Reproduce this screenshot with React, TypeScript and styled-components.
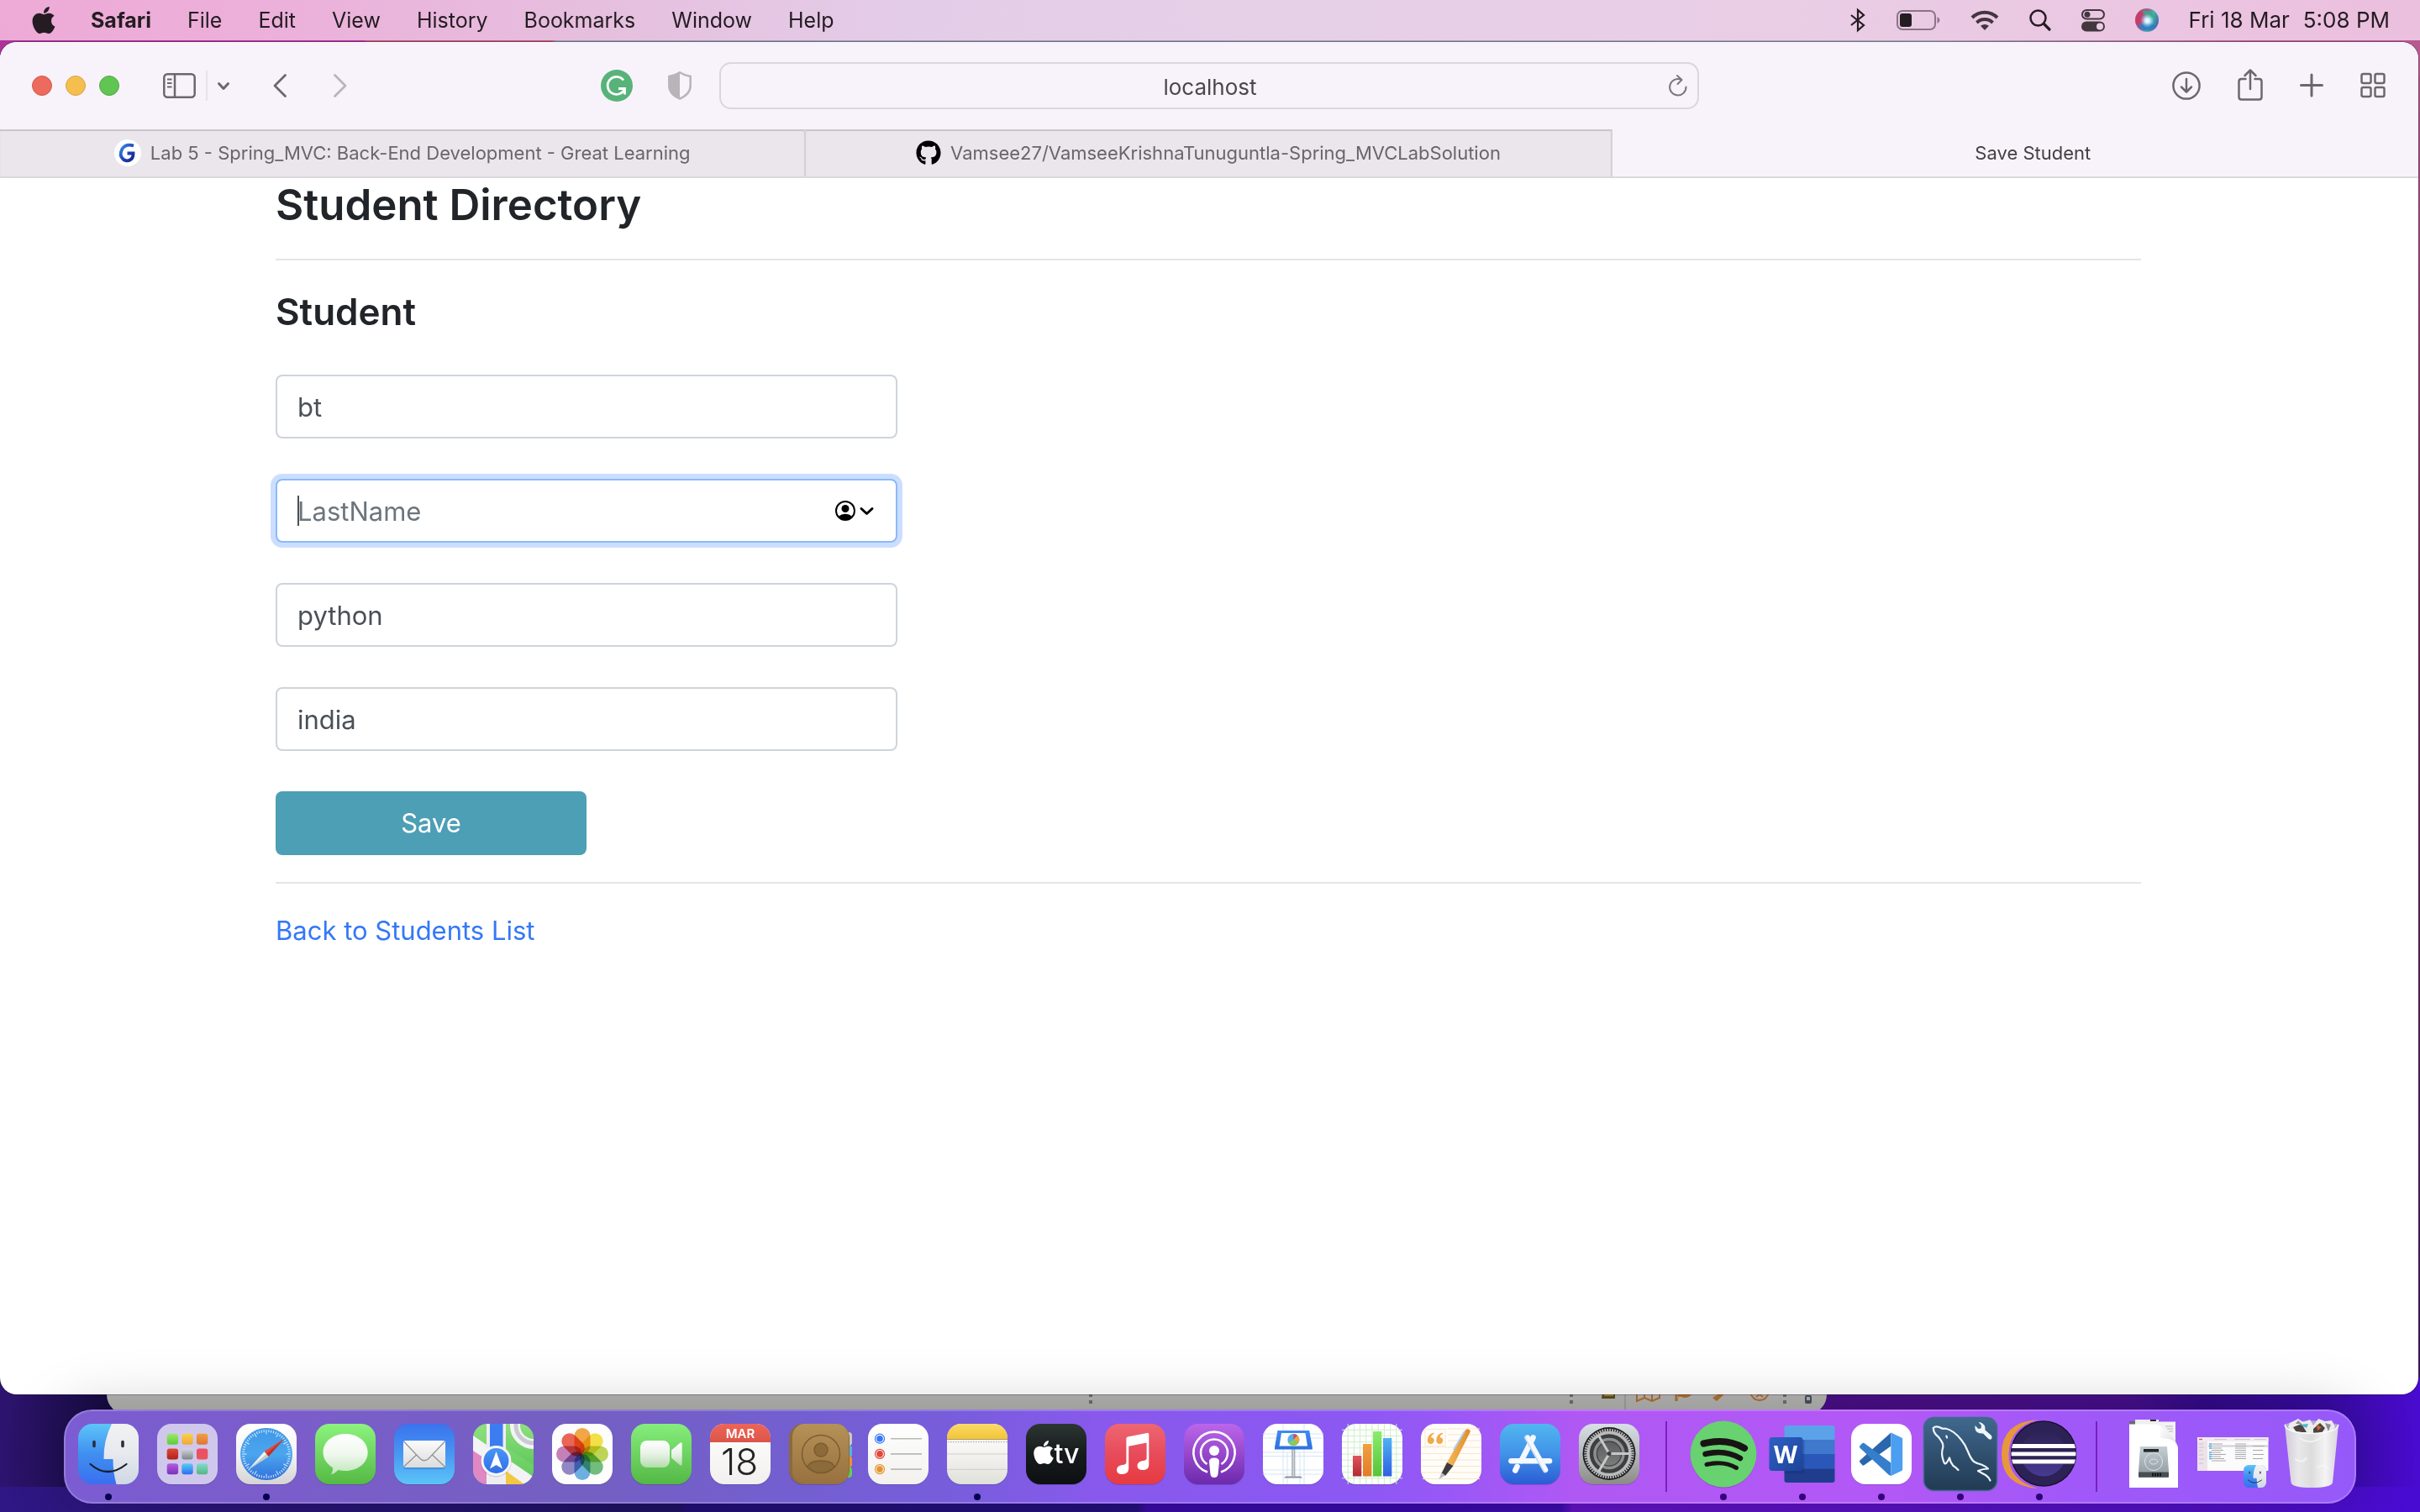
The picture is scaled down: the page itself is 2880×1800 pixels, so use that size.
import React from 'react';
import styled, { createGlobalStyle } from 'styled-components';
import { FaApple, FaGithub } from 'react-icons/fa';

const GlobalStyle = createGlobalStyle`
  *, *::before, *::after { box-sizing: border-box; }
  html, body { margin: 0; padding: 0; }
  body {
    font-family: Inter, "Liberation Sans", sans-serif;
    -webkit-font-smoothing: antialiased;
  }
  button, input { font: inherit; }
  button { background: none; border: 0; padding: 0; margin: 0; color: inherit; }
  svg { display: block; overflow: visible; }
`;

/* ---------- desktop ---------- */

const Desktop = styled.div`
  display: flex;
  flex-direction: column;
  min-height: 100vh;
  overflow: hidden;
  background:
    linear-gradient(90deg, #ad339b 0%, #b0359b 15%, #bd5876 15.2%, #bd5876 22.8%, #9299ae 23%, #a9a3b5 80%, #b4608f 93%, #b85a92 100%) top / 100% 90px no-repeat,
    linear-gradient(90deg, #2f1785 0%, #1f1262 28%, #220f75 28.4%, #24107c 47%, #390ba6 47.4%, #3a0bac 64.5%, #6212c4 65%, #5010c4 92%, #480bd2 100%) bottom / 100% 30px no-repeat,
    linear-gradient(90deg, #2e1470 0%, #170b42 4.4%, #200d55 50%, #4a0f86 76%, #450f8a 88%, #330a88 91%, #360aa0 96%, #4a0bd0 100%) bottom / 100% 160px no-repeat,
    linear-gradient(180deg, #b85a92, #6b2458 40%, #3a1060);
`;

const MenuBar = styled.header`
  display: flex;
  justify-content: space-between;
  align-items: center;
  height: 48px;
  padding: 0 36px 0 39px;
  color: #241c22;
  font-size: 25px;
  line-height: 32px;
  background: linear-gradient(90deg, #eeaad7 0%, #ecb0da 11%, #e6bede 24%, #e3cce7 37%, #e5d0e8 52%, #e9cde5 75%, #ebc5e1 90%, #ebbfde 100%);
`;

const MenuGroup = styled.nav`
  display: flex;
  align-items: center;
  gap: 43px;
`;

const AppleMark = styled(FaApple)`
  width: 26px;
  height: 32px;
`;

const MenuItem = styled.button<{ $bold?: boolean }>`
  font-weight: ${(p) => (p.$bold ? 700 : 400)};
  white-space: nowrap;
`;

const StatusGroup = styled.div`
  display: flex;
  align-items: center;
  gap: 36px;
`;

const Clock = styled.time`
  display: flex;
  gap: 16px;
  font-size: 26px;
  white-space: nowrap;
`;

/* ---------- browser window ---------- */

const BrowserWindow = styled.main`
  position: relative;
  z-index: 1;
  flex: 1;
  display: flex;
  flex-direction: column;
  margin: 2px 2px 0 0;
  border-radius: 20px;
  overflow: hidden;
  background: #fff;
  box-shadow: 0 0 0 1px rgba(40, 20, 40, 0.35);
`;

const Toolbar = styled.div`
  display: grid;
  grid-template-columns: minmax(0, 1fr) minmax(320px, 40.5%) minmax(0, 1fr);
  align-items: center;
  height: 104px;
  background: #f8f3fa;
  color: #6c666d;
`;

const ToolbarLeft = styled.div`
  display: flex;
  align-items: center;
  padding: 0 33px 0 38px;
`;

const TrafficLights = styled.div`
  display: flex;
  gap: 16px;
  margin-right: 52px;
`;

const Light = styled.button<{ $fill: string; $edge: string }>`
  width: 24px;
  height: 24px;
  border-radius: 50%;
  background: ${(p) => p.$fill};
  border: 1px solid ${(p) => p.$edge};
`;

const SidebarGroup = styled.div`
  display: flex;
  align-items: center;
  gap: 12px;
  margin-right: 52px;
`;

const ToolDivider = styled.span`
  width: 2px;
  height: 36px;
  background: #e8e2ea;
`;

const HistoryGroup = styled.div`
  display: flex;
  gap: 56px;
`;

const ExtensionGroup = styled.div`
  display: flex;
  align-items: center;
  gap: 42px;
  margin-left: auto;
`;

const AddressBar = styled.label`
  display: flex;
  align-items: center;
  height: 56px;
  padding: 0 12px 0 36px;
  border: 2px solid #dad6db;
  border-radius: 14px;
`;

const AddressInput = styled.input`
  flex: 1;
  min-width: 0;
  border: 0;
  outline: 0;
  padding: 3px 0 0;
  background: none;
  text-align: center;
  font-size: 26px;
  line-height: 32px;
  color: #4b474c;
`;

const ToolbarRight = styled.div`
  display: flex;
  align-items: center;
  justify-content: flex-end;
  gap: 44px;
  padding-right: 39px;
`;

const TabBar = styled.div`
  display: grid;
  grid-template-columns: repeat(3, minmax(0, 1fr));
  height: 58px;
  border-bottom: 2px solid #dcd8dd;
`;

const Tab = styled.button<{ $active?: boolean }>`
  display: flex;
  align-items: center;
  justify-content: center;
  gap: 11px;
  padding-left: ${(p) => (p.$active ? '42px' : '0')};
  font-size: 22px;
  line-height: 28px;
  white-space: nowrap;
  color: ${(p) => (p.$active ? '#454046' : '#6a646c')};
  background: ${(p) => (p.$active ? '#f8f3fa' : '#ebe6ec')};
  border-right: ${(p) => (p.$active ? '0' : '2px solid #d6d1d7')};
  box-shadow: ${(p) => (p.$active ? 'none' : 'inset 0 2px 1px #c9c4ca')};
`;

/* ---------- page ---------- */

const Page = styled.section`
  flex: 1;
  width: 100%;
  max-width: 2280px;
  margin: 0 auto;
  padding: 0 31px 0 29px;
  color: #212529;
`;

const Title = styled.h3`
  margin: 0;
  font-size: 51px;
  line-height: 64px;
  font-weight: 600;
`;

const Rule = styled.hr`
  margin: 32px 0;
  border: 0;
  border-top: 2px solid #e5e5e5;
`;

const Subtitle = styled.h4`
  margin: 0 0 46px;
  font-size: 44px;
  line-height: 58px;
  font-weight: 600;
`;

const StudentForm = styled.form`
  display: flex;
  flex-direction: column;
  gap: 48px;
`;

const Field = styled.div`
  position: relative;
  width: 33.33%;
`;

const TextInput = styled.input<{ $focused?: boolean }>`
  display: block;
  width: 100%;
  height: 76px;
  padding: 12px 24px;
  font-size: 31px;
  line-height: 48px;
  color: #495057;
  background: #fff;
  outline: 0;
  border: 2px solid ${(p) => (p.$focused ? '#8abafb' : '#ced4da')};
  border-radius: 8px;
  box-shadow: ${(p) => (p.$focused ? '0 0 0 6px #ccdeff' : 'none')};
  &::placeholder { color: #6c757d; opacity: 1; }
`;

const Caret = styled.span`
  position: absolute;
  left: 26px;
  top: 20px;
  width: 2px;
  height: 36px;
  background: #495057;
`;

const AutofillButton = styled.button`
  position: absolute;
  right: 28px;
  top: 26px;
  color: #000;
`;

const SaveButton = styled.button`
  width: 16.67%;
  height: 76px;
  border-radius: 8px;
  font-size: 31px;
  line-height: 48px;
  color: #fff;
  background: #4c9fb5;
`;

const BackLink = styled.a`
  font-size: 31px;
  line-height: 48px;
  color: #3478f6;
  text-decoration: none;
`;

/* ---------- dock ---------- */

const PeekStrip = styled.div`
  position: relative;
  height: 18px;
`;

const PeekWindow = styled.div`
  position: absolute;
  left: 4.4%;
  right: 24.5%;
  top: -30px;
  height: 54px;
  border-radius: 0 0 24px 24px;
  background: #b4b4b3;
  display: flex;
  justify-content: flex-end;
  align-items: flex-start;
  padding: 28px 4px 0 0;
`;

const DockBar = styled.footer`
  position: relative;
  z-index: 2;
  display: flex;
  align-self: center;
  margin-bottom: 10px;
  padding: 7px 4px 2px;
  border: 2px solid rgba(255, 255, 255, 0.2);
  border-radius: 34px;
  background: linear-gradient(90deg, #7c5cd2 0%, #7a5dca 10%, #745fc2 22%, #735fd0 32%, #785ddc 39%, #8859ec 45%, #8b58f2 56%, #9758f6 60%, #b058f4 66%, #b158f6 80%, #a058f8 88%, #9659f9 100%) border-box;
  box-shadow: 0 0 70px rgba(0, 0, 0, 0.22);
`;

const DockItem = styled.button`
  display: flex;
  flex-direction: column;
  align-items: center;
  width: 94px;
`;

const RunningDot = styled.span<{ $color?: string }>`
  width: 8px;
  height: 8px;
  margin-top: 3px;
  border-radius: 50%;
  background: ${(p) => p.$color ?? 'transparent'};
`;

const DockDivider = styled.span`
  width: 2px;
  height: 84px;
  margin: 5px 20px 0;
  background: #7a20c0;
`;

/* ---------- small icons ---------- */

const Bluetooth = () => (
  <svg width="20" height="28" viewBox="0 0 20 28" fill="none" stroke="#241c22" strokeWidth="2.2">
    <path d="M2 8 L17 20 L10 26 V2 L17 8 L2 20" />
  </svg>
);

const Battery = () => (
  <svg width="52" height="24" viewBox="0 0 52 24">
    <rect x="1" y="1" width="45" height="22" rx="6" fill="none" stroke="#8d7387" strokeWidth="2" />
    <rect x="4" y="4" width="14" height="16" rx="3" fill="#241c22" />
    <path d="M48.500 8 q3 1.500 3 4 t-3 4z" fill="#8d7387" />
  </svg>
);

const Wifi = () => (
  <svg width="34" height="24" viewBox="0 0 34 24" fill="none" stroke="#43363f" strokeWidth="4">
    <path d="M2 9 A21 21 0 0 1 32 9" />
    <path d="M7.500 15 A13.500 13.500 0 0 1 26.500 15" />
    <path d="M17 24 L12 18.800 Q17 15 22 18.800Z" fill="#43363f" stroke="none" />
  </svg>
);

const Search = () => (
  <svg width="26" height="26" viewBox="0 0 26 26" fill="none" stroke="#241c22" strokeLinecap="round">
    <circle cx="10.500" cy="10.500" r="9" strokeWidth="2.500" />
    <path d="M17.500 17.500 L24 24" strokeWidth="3.200" />
  </svg>
);

const ControlCenter = () => (
  <svg width="28" height="27" viewBox="0 0 28 27">
    <rect x="1" y="1" width="26" height="10.500" rx="5.250" fill="none" stroke="#43363f" strokeWidth="2" />
    <circle cx="7" cy="6.250" r="3.500" fill="#43363f" />
    <rect x="0" y="14.500" width="28" height="12" rx="6" fill="#43363f" />
    <circle cx="22" cy="20.500" r="4" fill="#e9cde5" />
  </svg>
);

const Siri = () => (
  <svg width="28" height="28" viewBox="0 0 28 28">
    <defs>
      <linearGradient id="siriBase" x1="0" y1="0.300" x2="1" y2="0.700">
        <stop offset="0" stopColor="#c23f74" />
        <stop offset="0.400" stopColor="#8d6a9a" />
        <stop offset="0.650" stopColor="#3fb6a6" />
        <stop offset="1" stopColor="#4a5bb0" />
      </linearGradient>
      <radialGradient id="siriGlow">
        <stop offset="0" stopColor="#fff" />
        <stop offset="0.350" stopColor="#d8f6ff" stopOpacity="0.900" />
        <stop offset="1" stopColor="#6fd6ff" stopOpacity="0" />
      </radialGradient>
    </defs>
    <circle cx="14" cy="14" r="14" fill="url(#siriBase)" />
    <path d="M3 21 Q13 14 25 21 A14 14 0 0 1 3 21Z" fill="#2f78c4" opacity="0.850" />
    <path d="M0.500 13 Q2 5 9 1.500 Q8 12 12 16 Q5 20 2 20 Q0 16 0.500 13Z" fill="#c93a66" opacity="0.800" />
    <path d="M8 3 Q20 2 24 12 Q15 12 8 3Z" fill="#3aa77d" opacity="0.900" />
    <circle cx="14.500" cy="14.500" r="8.500" fill="url(#siriGlow)" />
  </svg>
);

const SidebarIcon = () => (
  <svg width="39" height="30" viewBox="0 0 39 30" fill="none" stroke="currentColor" strokeWidth="2.500">
    <rect x="1.300" y="1.300" width="36.400" height="27.400" rx="4" />
    <path d="M14 1 V29" />
    <path d="M5 7.500 H10.500 M5 12 H10.500 M5 16.500 H10.500" strokeWidth="2" />
  </svg>
);

const Chevron = ({ w = 14, h = 9, sw = 3 }: { w?: number; h?: number; sw?: number }) => (
  <svg width={w} height={h} viewBox="0 0 14 9" fill="none" stroke="currentColor" strokeWidth={sw} strokeLinecap="round" strokeLinejoin="round">
    <path d="M1.500 1.500 L7 7.500 L12.500 1.500" />
  </svg>
);

const Back = () => (
  <svg width="16" height="28" viewBox="0 0 16 28" fill="none" stroke="currentColor" strokeWidth="2.800" strokeLinecap="round" strokeLinejoin="round">
    <path d="M14.500 1.500 L2 14 L14.500 26.500" />
  </svg>
);

const Forward = () => (
  <svg width="16" height="28" viewBox="0 0 16 28" fill="none" stroke="#b9b4ba" strokeWidth="2.800" strokeLinecap="round" strokeLinejoin="round">
    <path d="M1.500 1.500 L14 14 L1.500 26.500" />
  </svg>
);

const Grammarly = () => (
  <svg width="38" height="38" viewBox="0 0 38 38">
    <circle cx="19" cy="19" r="19" fill="#57b37a" />
    <path d="M27 12.500 A10.500 10.500 0 1 0 28.500 22.500 M21 22.500 H28.500 V29.500" fill="none" stroke="#fff" strokeWidth="2.800" />
  </svg>
);

const Shield = () => (
  <svg width="28" height="34" viewBox="0 0 28 34">
    <path d="M14 1.300 Q20 5 26.700 6 V17 Q26.700 27 14 32.500 Q1.300 27 1.300 17 V6 Q8 5 14 1.300Z" fill="none" stroke="#b9b4ba" strokeWidth="2.500" />
    <path d="M14 1.300 Q8 5 1.300 6 V17 Q1.300 27 14 32.500Z" fill="#b9b4ba" />
  </svg>
);

const Reload = () => (
  <svg width="22" height="26" viewBox="0 0 22 26" fill="none" stroke="#7b767c" strokeWidth="2" strokeLinecap="round" strokeLinejoin="round">
    <path d="M20.500 14.500 A9.700 9.700 0 1 1 15 6 " />
    <path d="M10 1 L15.500 6 L10.500 11" />
  </svg>
);

const Download = () => (
  <svg width="34" height="34" viewBox="0 0 34 34" fill="none" stroke="currentColor" strokeWidth="2.500" strokeLinecap="round" strokeLinejoin="round">
    <circle cx="17" cy="17" r="15.600" />
    <path d="M17 9 V24 M11 18.500 L17 24.500 L23 18.500" />
  </svg>
);

const Share = () => (
  <svg width="30" height="38" viewBox="0 0 30 38" fill="none" stroke="currentColor" strokeWidth="2.500" strokeLinecap="round" strokeLinejoin="round">
    <path d="M9.500 11 H4.500 Q1.500 11 1.500 14 V32.500 Q1.500 35.500 4.500 35.500 H25.500 Q28.500 35.500 28.500 32.500 V14 Q28.500 11 25.500 11 H20.500" />
    <path d="M15 23 V1 M8.500 7 L15 0.500 L21.500 7" />
  </svg>
);

const Plus = () => (
  <svg width="28" height="28" viewBox="0 0 28 28" fill="none" stroke="currentColor" strokeWidth="3" strokeLinecap="round">
    <path d="M14 1 V26 M1.500 13.500 H26.500" />
  </svg>
);

const GridIcon = () => (
  <svg width="30" height="30" viewBox="0 0 30 30" fill="none" stroke="currentColor" strokeWidth="2.500">
    <rect x="1.500" y="1" width="11" height="11" rx="2" />
    <rect x="17.500" y="1" width="11" height="11" rx="2" />
    <rect x="1.500" y="17" width="11" height="11" rx="2" />
    <rect x="17.500" y="17" width="11" height="11" rx="2" />
  </svg>
);

const GreatLearning = () => (
  <svg width="32" height="32" viewBox="0 0 32 32">
    <defs>
      <linearGradient id="glG" x1="0" y1="0" x2="1" y2="1">
        <stop offset="0" stopColor="#3b8be8" />
        <stop offset="0.600" stopColor="#1d3fb0" />
        <stop offset="1" stopColor="#14258a" />
      </linearGradient>
    </defs>
    <circle cx="16" cy="16" r="16" fill="#fff" />
    <path d="M23 7.500 Q14 4.500 9.500 11 Q5 19 11 24 Q17 27.500 21.500 22 Q22.500 20 22.500 16.500 H15.500" fill="none" stroke="url(#glG)" strokeWidth="3.800" />
  </svg>
);

const AutofillIcon = () => (
  <svg width="46" height="24" viewBox="0 0 46 24">
    <circle cx="12" cy="12" r="11" fill="none" stroke="#000" strokeWidth="2" />
    <circle cx="12" cy="9.500" r="4.500" fill="#000" />
    <path d="M3.500 19 Q12 12.500 20.500 19 Q12 27 3.500 19Z" fill="#000" />
    <path d="M31 9.500 L37.500 15.500 L44 9.500" fill="none" stroke="#000" strokeWidth="3" strokeLinecap="round" strokeLinejoin="round" />
  </svg>
);

/* ---------- dock artwork, each on an 88 x 88 board ---------- */

const Grad = ({ id, stops, x2 = 0, y2 = 1 }: { id: string; stops: string[]; x2?: number; y2?: number }) => (
  <linearGradient id={id} x1="0" y1="0" x2={x2} y2={y2}>
    {stops.map((c, i) => (
      <stop key={i} offset={i / (stops.length - 1)} stopColor={c} />
    ))}
  </linearGradient>
);

const Board = ({ children }: { children: React.ReactNode }) => (
  <svg width="88" height="88" viewBox="0 0 88 88">
    {children}
  </svg>
);

const Tile = ({ fill }: { fill: string }) => (
  <>
    <rect x="8" y="9" width="72" height="72" rx="17" fill="#000" opacity="0.150" />
    <rect x="8" y="8" width="72" height="72" rx="17" fill={fill} />
  </>
);

const FinderFace = ({ id }: { id: string }) => (
  <>
    <defs>
      <Grad id={`${id}b`} stops={['#5ec4f8', '#3f8ff0', '#3a6ff0']} />
      <Grad id={`${id}w`} stops={['#f2f2f2', '#e6e9ee', '#cfd8e4']} />
      <clipPath id={`${id}c`}><rect x="8" y="8" width="72" height="72" rx="17" /></clipPath>
    </defs>
    <g clipPath={`url(#${id}c)`}>
      <rect x="8" y="8" width="72" height="72" fill={`url(#${id}b)`} />
      <path d="M48 8 Q38 28 38.500 50 H49.500 Q49.500 66 53.500 80 H80 V8Z" fill={`url(#${id}w)`} />
    </g>
    <path d="M27 29.500 V34.500 M61 29.500 V34.500" stroke="#26303c" strokeWidth="3.600" strokeLinecap="round" />
    <path d="M22.500 56 Q43 74 65.500 56" fill="none" stroke="#18202a" strokeWidth="2.200" strokeLinecap="round" />
  </>
);

const FinderIcon = () => <Board><FinderFace id="fnd" /></Board>;

const LaunchpadIcon = () => {
  const colors = [['#9be86b', '#5fcb3c'], ['#f8d24a', '#efa83a'], ['#f0a03c', '#e0743a'], ['#e04838', '#b02218'], ['#d4d8dc', '#7f8488'], ['#ee4d62', '#e85560'], ['#b35ce0', '#7a30b8'], ['#56cdf5', '#2f6cf0'], ['#7fdcd0', '#55b67e']];
  return (
    <Board>
      <defs>{colors.map((c, i) => <Grad key={i} id={`lp${i}`} stops={c} />)}</defs>
      <Tile fill="#d0c8ec" />
      {colors.map((_, i) => (
        <rect key={i} x={19.7 + (i % 3) * 17.6} y={19.7 + Math.floor(i / 3) * 17.8} width="13.400" height="13" rx="3" fill={`url(#lp${i})`} />
      ))}
    </Board>
  );
};

const SafariIcon = () => (
  <Board>
    <defs>
      <Grad id="sfT" stops={['#ffffff', '#f4f4f4', '#d4d4d6']} />
      <Grad id="sfC" stops={['#3f97e8', '#4ca6ee', '#2f6fdc']} />
    </defs>
    <Tile fill="url(#sfT)" />
    <circle cx="44" cy="44" r="31" fill="url(#sfC)" />
    {Array.from({ length: 60 }, (_, i) => (
      <path key={i} d={`M44 15 V${i % 5 ? 18 : 20.5}`} stroke="#dceeff" strokeWidth="1" transform={`rotate(${i * 6} 44 44)`} />
    ))}
    <path d="M65.500 25.500 L41.500 41 L46.500 47Z" fill="#e5483c" />
    <path d="M22.500 62.500 L41.500 41 L46.500 47Z" fill="#f3f3f5" />
    <path d="M65.500 25.500 L46.500 47 L44 44Z" fill="#b8342c" />
    <path d="M22.500 62.500 L46.500 47 L44 44Z" fill="#c4c8d0" />
  </Board>
);

const MessagesIcon = () => (
  <Board>
    <defs>
      <Grad id="msT" stops={['#8cf37f', '#55b944']} />
      <Grad id="msB" stops={['#ffffff', '#f0f8ee', '#bfe6b8']} />
    </defs>
    <Tile fill="url(#msT)" />
    <path d="M44 20 C59 20 70.700 29.500 70.700 42 C70.700 54.500 59 64 44 64 C41 64 38 63.600 35.300 62.900 C33 65.500 30.500 67.500 27 68 C28.800 65.500 29.200 63 28.800 60 C22 56 17.500 49.500 17.500 42 C17.500 29.500 29 20 44 20Z" fill="url(#msB)" />
  </Board>
);

const MailIcon = () => (
  <Board>
    <defs>
      <Grad id="mlT" stops={['#3a72ee', '#4797f2', '#5cc4f8']} />
      <Grad id="mlE" stops={['#fbfbfb', '#dcdcdc']} />
    </defs>
    <Tile fill="url(#mlT)" />
    <rect x="19" y="30" width="50" height="32" rx="3" fill="#1d4fa8" opacity="0.300" />
    <rect x="19" y="28" width="50" height="32" rx="3" fill="url(#mlE)" />
    <path d="M20 29.500 L38.500 49 Q44 54.500 49.500 49 L68 29.500 M20 58.800 L34.500 45 M68 58.800 L53.500 45" fill="none" stroke="#8f9194" strokeWidth="1.200" />
  </Board>
);

const MapsIcon = () => (
  <Board>
    <defs>
      <clipPath id="mpC"><rect x="8" y="8" width="72" height="72" rx="17" /></clipPath>
      <Grad id="mpG" stops={['#8fe07e', '#5fc85a']} />
      <Grad id="mpB" stops={['#4a94f6', '#2f6fe8']} />
    </defs>
    <g clipPath="url(#mpC)">
      <rect x="8" y="8" width="72" height="72" fill="url(#mpG)" />
      <path d="M8 37 L26 50 V80 H8Z" fill="#e088c4" />
      <path d="M47 62 L74 82 H47Z" fill="#f2c843" />
      <path d="M2 18 L84 74 V90 L2 36Z" fill="#f3f3f6" />
      <path d="M47 36 L84 60 V20 L47 8Z" fill="url(#mpG)" />
      <path d="M47 64 L69 80 H47Z" fill="#f2c843" />
      <rect x="24" y="8" width="23" height="72" fill="#eeeef2" />
      <rect x="28" y="8" width="15.500" height="44" fill="#3b7df0" />
      <circle cx="80" cy="10" r="22" fill="none" stroke="#f4f4f6" strokeWidth="12" />
      <circle cx="80" cy="10" r="21" fill="none" stroke="#c9cbd0" strokeWidth="5" />
    </g>
    <circle cx="35.500" cy="53" r="18.500" fill="#000" opacity="0.120" />
    <circle cx="35.500" cy="52" r="18" fill="#f5f5f7" />
    <circle cx="35.500" cy="52" r="15" fill="url(#mpB)" />
    <path d="M35.500 41 L43 61.500 L35.500 57 L28 61.500Z" fill="#fff" />
  </Board>
);

const PhotosIcon = () => {
  const petals = ['#f09a2e', '#f2dc30', '#b4d040', '#5cb46c', '#58a4dc', '#7f78bc', '#bc6fae', '#e8503e'];
  return (
    <Board>
      <Tile fill="#fdfdfd" />
      <g style={{ isolation: 'isolate' }}>
        {petals.map((c, i) => (
          <rect key={c} x="34.500" y="13" width="19" height="31" rx="9.500" fill={c} opacity="0.880" transform={`rotate(${i * 45} 44 44)`} style={{ mixBlendMode: 'multiply' }} />
        ))}
      </g>
    </Board>
  );
};

const FaceTimeIcon = () => (
  <Board>
    <defs>
      <Grad id="ftT" stops={['#86ee7c', '#54b846']} />
      <Grad id="ftC" stops={['#ffffff', '#e8f2e6', '#b4dcac']} />
    </defs>
    <Tile fill="url(#ftT)" />
    <rect x="19" y="28" width="35" height="32" rx="8" fill="url(#ftC)" />
    <path d="M56 39.500 L66 31 Q68.700 29 68.700 32 V56 Q68.700 59 66 57 L56 48.500Z" fill="url(#ftC)" />
  </Board>
);

const CalendarIcon = () => (
  <Board>
    <defs>
      <Grad id="clT" stops={['#ffffff', '#f1f0ee']} />
      <Grad id="clR" stops={['#ee6558', '#da5548']} />
    </defs>
    <Tile fill="url(#clT)" />
    <path d="M8 30 V25 A17 17 0 0 1 25 8 H63 A17 17 0 0 1 80 25 V30Z" fill="url(#clR)" />
    <text x="44" y="25" textAnchor="middle" fontSize="15" fontWeight="600" fill="#fff" fontFamily="Inter, sans-serif">MAR</text>
    <text x="43" y="69" textAnchor="middle" fontSize="44" fontWeight="300" fill="#242424" fontFamily="Inter, sans-serif">18</text>
  </Board>
);

const ContactsIcon = () => (
  <Board>
    <defs><Grad id="ctT" stops={['#b59257', '#97703f']} /></defs>
    <rect x="68" y="18" width="15" height="16" rx="4" fill="#c9c9c4" />
    <rect x="68" y="34" width="15" height="13" rx="2" fill="#55b4e4" />
    <rect x="68" y="47" width="15" height="12" rx="2" fill="#ee9030" />
    <rect x="68" y="59" width="15" height="13" rx="4" fill="#62cc58" />
    <Tile fill="#8c6a3a" />
    <rect x="12" y="8" width="67" height="72" rx="15" fill="url(#ctT)" />
    <g stroke="#7c5c30" strokeWidth="1.500">
      <circle cx="46" cy="44" r="22.500" fill="none" />
      <circle cx="46" cy="39" r="8" fill="#8c6a3a" />
      <path d="M29.500 59 Q33 52 46 52 Q59 52 62.500 59 Q46 74 29.500 59Z" fill="#8c6a3a" />
    </g>
  </Board>
);

const RemindersIcon = () => (
  <Board>
    <defs><Grad id="rmT" stops={['#ffffff', '#f2f1ee']} /></defs>
    <Tile fill="url(#rmT)" />
    {['#3478f6', '#e2463a', '#e8932f'].map((c, i) => (
      <g key={c}>
        <circle cx="22" cy={25.7 + i * 18.2} r="5.500" fill="none" stroke={c} strokeWidth="1.200" />
        <circle cx="22" cy={25.7 + i * 18.2} r="3.800" fill={c} />
        <path d={`M35 ${25.7 + i * 18.2} H72`} stroke="#b9b9b6" strokeWidth="1.600" />
      </g>
    ))}
  </Board>
);

const NotesIcon = () => (
  <Board>
    <defs>
      <Grad id="ntT" stops={['#ffffff', '#f4f3f0', '#e0e0da']} />
      <Grad id="ntY" stops={['#fadb6a', '#f3c436']} />
    </defs>
    <Tile fill="url(#ntT)" />
    <path d="M8 26 V25 A17 17 0 0 1 25 8 H63 A17 17 0 0 1 80 25 V26Z" fill="url(#ntY)" />
    <path d="M8 26.500 H80" stroke="#a9966a" strokeWidth="1.200" />
    <path d="M9 29.500 H80" stroke="#b5b5b0" strokeWidth="1.500" strokeDasharray="1.500 1.500" />
    <path d="M8 44 H80 M8 62.300 H80" stroke="#cfcfca" strokeWidth="1" />
  </Board>
);

const TvIcon = () => (
  <Board>
    <defs><Grad id="tvT" stops={['#2c3633', '#161b1c', '#0d1012']} /></defs>
    <Tile fill="url(#tvT)" />
    <FaApple x="15" y="28" size={28} viewBox="18 32 348 448" color="#fff" />
    <text x="41.500" y="54.500" fontSize="32" fontWeight="500" fill="#fff" fontFamily="Inter, sans-serif">tv</text>
  </Board>
);

const MusicIcon = () => (
  <Board>
    <defs><Grad id="muT" stops={['#ee6673', '#e84b5a', '#e63a40']} /></defs>
    <Tile fill="url(#muT)" />
    <path d="M33.400 25.500 Q33.400 24 35 23.600 L58 18.900 Q60.300 18.500 60.300 20.500 V57 Q60 63 53 63 Q46.500 63 46.500 58 Q46.500 53 53 52 Q57.600 51.500 57.600 49 V30.500 L36.200 34.800 V61.500 Q36 68 28.500 68 Q22 68 22 63 Q22 58 28.500 57 Q33.400 56.500 33.400 54Z" fill="#fff" />
  </Board>
);

const PodcastsIcon = () => (
  <Board>
    <defs><Grad id="pcT" stops={['#bb66ea', '#9647cc', '#6c2aac']} /></defs>
    <Tile fill="url(#pcT)" />
    <g fill="none" stroke="#fff" strokeWidth="2.600">
      <path d="M36 65.500 A24.600 24.600 0 1 1 52 65.500" />
      <path d="M35.500 56 A16 16 0 1 1 52.500 56" />
    </g>
    <circle cx="44" cy="40" r="6" fill="#fff" />
    <path d="M38 53 Q38 48.500 44 48.500 Q50 48.500 50 53 L48.500 68 Q48 72 44 72 Q40 72 39.500 68Z" fill="#fff" />
  </Board>
);

const KeynoteIcon = () => (
  <Board>
    <defs>
      <Grad id="knB" stops={['#3f8cf0', '#2f6fe0']} />
      <Grad id="knP" stops={['#8d949e', '#d8dbe0', '#8d949e']} x2={1} y2={0} />
    </defs>
    <Tile fill="#fff" />
    <path d="M32 8 V80 M37 42 V80 M52 42 V80 M57 8 V80 M8 20 H80 M8 25 H80 M8 42 H80 M8 46.500 H80 M8 63 H80 M8 68 H80" stroke="#d5e6f4" strokeWidth="1" fill="none" />
    <path d="M33 72.500 L35 70.500 H53 L55 72.500Z" fill="#8a9096" />
    <rect x="42.300" y="38" width="4" height="33" fill="url(#knP)" />
    <path d="M25.400 16 H63.200 L66.800 36 V38.500 H22 V36Z" fill="url(#knB)" />
    <path d="M30 19 H58.500 L61 34.500 H27.500Z" fill="#fdfdfd" />
    <circle cx="44.300" cy="27" r="7" fill="#56b0ec" />
    <path d="M44.300 27 V20 A7 7 0 0 1 49.200 22Z" fill="#c94a6a" />
    <path d="M44.300 27 L49.200 22 A7 7 0 0 1 50.500 30.300Z" fill="#f0a53a" />
    <path d="M44.300 27 L50.500 30.300 A7 7 0 0 1 38.200 30.500Z" fill="#86cc5c" />
  </Board>
);

const NumbersIcon = () => {
  const bars = [[21, 46, '#e2555c', '#b22a34'], [33, 32, '#f2a040', '#e07c26'], [45, 17, '#8cec6c', '#56c438'], [57, 25, '#4fb2f4', '#2f5fe4']] as const;
  return (
    <Board>
      <defs>{bars.map((b, i) => <Grad key={i} id={`nb${i}`} stops={[b[2], b[3]]} />)}</defs>
      <Tile fill="#fff" />
      <g stroke="#cdeec8" strokeWidth="1">
        {[1, 2, 3, 4, 5, 6, 7, 8, 9].map((i) => (
          <path key={i} d={`M${8 + i * 7.2} 8 V80 M8 ${8 + i * 7.2} H80`} />
        ))}
      </g>
      {bars.map((b, i) => (
        <rect key={i} x={b[0]} y={b[1]} width="10.300" height={70.5 - b[1]} fill={`url(#nb${i})`} />
      ))}
    </Board>
  );
};

const PagesIcon = () => (
  <Board>
    <defs><Grad id="pgP" stops={['#f6b85a', '#e08c28']} x2={1} y2={0} /></defs>
    <Tile fill="#fffdfa" />
    <path d="M40 14 H78 M40 21 H80 M40 28 H80 M8 36 H80 M8 43.500 H80 M8 51 H80 M8 58.500 H80 M8 66 H80 M10 73.500 H78" stroke="#fbe3c4" strokeWidth="1.200" />
    <rect x="13" y="14.500" width="24" height="20" fill="#fffdfa" stroke="#fbe8d0" strokeWidth="1" />
    <path d="M23.500 18.500 Q16 20 15.800 27.500 A4 4 0 1 0 20 24 Q20.500 21 23.500 20Z M34 18.500 Q26.500 20 26.300 27.500 A4 4 0 1 0 30.500 24 Q31 21 34 20Z" fill="#f0aa48" />
    <path d="M61 15.500 Q65 12.500 67 17 L46.500 58 L39 54Z" fill="url(#pgP)" />
    <path d="M60 17 L47 39" stroke="#a8cdf0" strokeWidth="2" />
    <path d="M39 54 L46.500 58 L37 70 L32.500 67Z" fill="#3c3c3e" />
    <path d="M32.500 66 L37 69.500 L29.500 74Z" fill="#b9bcc0" />
  </Board>
);

const AppStoreIcon = () => (
  <Board>
    <defs><Grad id="asT" stops={['#52b6f0', '#4192e8', '#2b5cd4']} /></defs>
    <Tile fill="url(#asT)" />
    <g stroke="#f4f8ff" strokeWidth="6.600" strokeLinecap="round">
      <path d="M28.500 59 L26.300 63.500" />
      <path d="M47.500 24.500 L33.500 52" />
      <path d="M21.500 52.300 H67" />
      <path d="M40.500 24.500 L62 63" stroke="#c4d8f4" />
      <path d="M41.200 24 L62.700 62.500" strokeWidth="5" />
    </g>
  </Board>
);

const SettingsIcon = () => (
  <Board>
    <defs>
      <Grad id="stT" stops={['#d8dfe6', '#b4b8ba', '#8c8a86']} />
      <Grad id="stG" stops={['#6e7072', '#a6a6a4']} />
    </defs>
    <Tile fill="url(#stT)" />
    <circle cx="44" cy="43.500" r="31.500" fill="#1b1c1d" />
    <circle cx="44" cy="43.500" r="27.500" fill="none" stroke="#b4b6b6" strokeWidth="4.500" strokeDasharray="1.800 1.080" />
    <circle cx="44" cy="43.500" r="25" fill="#3c3e40" stroke="#babcbc" strokeWidth="3.500" />
    <circle cx="44" cy="43.500" r="17" fill="none" stroke="#8e9090" strokeWidth="3.500" />
    <circle cx="44" cy="43.500" r="14" fill="url(#stG)" opacity="0.600" />
    <path d="M44 43.500 H69 M44 43.500 L31.500 22 M44 43.500 L31.500 65" stroke="#c6c8c8" strokeWidth="3" />
    <circle cx="44" cy="43.500" r="2.500" fill="#3c3e40" />
  </Board>
);

const SpotifyIcon = () => (
  <Board>
    <circle cx="44" cy="45" r="39.500" fill="#000" opacity="0.150" />
    <circle cx="44" cy="44" r="39.500" fill="#67d26f" />
    <g fill="none" stroke="#191414" strokeLinecap="round">
      <path d="M20.500 31.500 Q48 24.500 69 37" strokeWidth="8" />
      <path d="M22.500 44 Q46 38 64 49" strokeWidth="6.500" />
      <path d="M24 56.500 Q44 51.500 59.500 60.500" strokeWidth="5" />
    </g>
  </Board>
);

const WordIcon = () => (
  <Board>
    <defs>
      <clipPath id="wdC"><rect x="22.500" y="10" width="60" height="68" rx="3" /></clipPath>
      <Grad id="wdT" stops={['#2d60c4', '#1e4398']} x2={1} />
    </defs>
    <g clipPath="url(#wdC)">
      <rect x="22" y="10" width="61" height="18" fill="#5ba2e8" />
      <rect x="22" y="27" width="61" height="18" fill="#3f78cc" />
      <rect x="22" y="44" width="61" height="18" fill="#2b57b8" />
      <rect x="22" y="61.700" width="61" height="17" fill="#1f3d8c" />
      <rect x="22" y="27" width="24.500" height="40" fill="#10286a" opacity="0.250" />
    </g>
    <rect x="4.500" y="24" width="40" height="40" rx="3.500" fill="url(#wdT)" />
    <text x="24" y="55" textAnchor="middle" fontSize="29" fontWeight="700" fill="#fff" fontFamily="'Open Sans', sans-serif">W</text>
  </Board>
);

const VsCodeIcon = () => (
  <Board>
    <Tile fill="#fff" />
    <path d="M55.400 18.500 V34.500 L23.500 57.300 Q22.500 58 21.500 57.300 L18.500 54 Q17.500 52.500 18.500 51.500Z" fill="#2a66ac" />
    <path d="M55.400 70 V54.500 L23.500 31 Q22.500 30.300 21.500 31 L18.500 34 Q17.500 35.500 18.500 36.800 L52.500 68.500Z" fill="#357ecb" />
    <path d="M55.400 18.500 L68 24.500 Q69.200 25 69.200 26.500 V62 Q69.200 63.500 68 64 L55.400 70 Q57 69 57 67 V21.500 Q57 19.500 55.400 18.500Z" fill="#4b9ef0" />
    <path d="M55.400 18.500 L57 19.500 V69 L55.400 70Z" fill="#4b9ef0" />
  </Board>
);

const MySqlIcon = () => (
  <Board>
    <defs><Grad id="myT" stops={['#40698f', '#30506f', '#223b54']} /></defs>
    <rect x="0.500" y="0.500" width="87" height="87" rx="12" fill="url(#myT)" stroke="#3d6c8c" strokeWidth="1.500" />
    <g fill="none" stroke="#eef5fb" strokeWidth="2.200" strokeLinecap="round" strokeLinejoin="round">
      <path d="M11.800 13 Q14 10.500 19 12 Q23 14.500 26 13.500 Q36 15.500 45 27 Q50 33 53 41 Q56 49 60 53 Q64 55.500 69 56.500 Q74 58.500 77 61.500 Q71 61.500 65 64 Q70 67 74 69 Q78 71.500 79.500 75.500" />
      <path d="M11.800 13 Q12 18 15 21 Q19 24 21 28 Q24.500 33 23 37 Q21 44 23.500 51 Q25 57 27 55 Q29 53 31 48.500 Q32 54 35.500 58 Q39 60 41.500 63" />
    </g>
    <ellipse cx="27.700" cy="23.500" rx="1.200" ry="2.200" fill="#eef5fb" transform="rotate(-20 27.700 23.500)" />
    <path d="M61.500 10 Q60.500 17 66 19 Q69 19.500 71 19.500 L77.500 26 Q80.500 28 81.500 25 Q82 23 80.500 21.500 L73.500 15.500 Q74.500 8.500 67 6 L66 6.500 L69 10 L68.500 13.500 L65.500 14 Z" fill="#eef5fb" />
  </Board>
);

const EclipseIcon = () => (
  <Board>
    <defs>
      <clipPath id="ecC"><circle cx="49" cy="43.500" r="38.500" /></clipPath>
      <Grad id="ecI" stops={['#2c2255', '#483a92']} />
    </defs>
    <path d="M42.500 3 Q-1 6 -1 44 Q-1 82 42.500 85 Q7 76 7.500 44 Q8 12 42.500 3Z" fill="#e8983c" />
    <circle cx="49" cy="43.500" r="39.300" fill="#140f28" />
    <circle cx="49" cy="43.500" r="38" fill="#2c2255" />
    <circle cx="49" cy="43.500" r="27" fill="url(#ecI)" />
    <g clipPath="url(#ecC)">
      <rect x="9" y="31" width="80" height="25" fill="#2c2255" />
      <path d="M9 34.500 H89 M9 43.800 H89 M9 53 H89" stroke="#fff" strokeWidth="4.800" />
    </g>
  </Board>
);

const DiskFileIcon = () => (
  <Board>
    <defs>
      <Grad id="dkD" stops={['#c4ced2', '#8d999f']} />
      <Grad id="dkF" stops={['#ffffff', '#d9d9d9']} x2={1} />
    </defs>
    <path d="M22 3 H50 V20 H22Z" fill="#efefef" />
    <path d="M15 5 H22 V12 H15Z" fill="#6a6a6c" />
    <path d="M40 3 H47 V5 H40Z" fill="#2c2c2c" />
    <path d="M50 5.500 H70 V42 H50Z" fill="#f2f2f2" />
    <path d="M58 11 H67 M60 14 H67 M62 17 H67" stroke="#b5b5b5" strokeWidth="1.200" />
    <path d="M15 8.500 H48 Q54 10 56 18 Q57 26 64 27 Q71 29 73 36 V84 H15Z" fill="#fff" />
    <path d="M52 10 V24 Q54 26 63 26 Q70 28 73 36 Q70 24 52 10Z" fill="url(#dkF)" />
    <path d="M28 35 H60 L62 65 V71.500 H26 V65Z" fill="url(#dkD)" />
    <rect x="26" y="65.500" width="36" height="6.200" rx="1" fill="#484e52" />
    <path d="M42 68.500 H54" stroke="#15181a" strokeWidth="4" strokeDasharray="2 1" />
    <rect x="32" y="38" width="18" height="3.600" fill="#23282b" />
    <circle cx="44" cy="53" r="10.500" fill="none" stroke="#dbe2e5" strokeWidth="1" />
    <ellipse cx="44" cy="53" rx="4.500" ry="3" fill="none" stroke="#dbe2e5" strokeWidth="1" />
  </Board>
);

const MinimizedFinderIcon = () => (
  <Board>
    <rect x="2" y="24" width="84.500" height="40" rx="1.500" fill="#fbfbfb" />
    <rect x="2" y="24" width="12" height="40" fill="#eee2ea" />
    <rect x="2" y="24" width="84.500" height="5" fill="#f3eaf1" />
    <path d="M4 26.500 H8" stroke="#e0584c" strokeWidth="1.400" />
    <path d="M22 26.500 H37 M46 26.500 H65 M70 26.500 H84" stroke="#cdc5cc" strokeWidth="1" />
    <path d="M15 34.500 H86" stroke="#cfcfd2" strokeWidth="1.800" />
    <path d="M16 32 H19 M16 34.500 H19 M16 37 H19 M16 42 H19 M16 44.500 H19 M16 47 H19 M16 49.500 H19" stroke="#58a8e8" strokeWidth="1.500" />
    <path d="M19 32 H32 M19 37 H31 M19 39.500 H33 M19 42 H30 M19 44.500 H36 M19 47 H30 M19 49.500 H34 M19 52 H36 M47 32 H60 M47 34.500 H60 M47 37 H60 M47 39.500 H60 M47 42 H60 M47 44.500 H60 M47 47 H60 M47 49.500 H60 M68 34.500 H82 M68 39.500 H80 M68 44.500 H81 M68 49.500 H80" stroke="#a8a8ac" strokeWidth="1" />
    <path d="M4 32 H9 M4 36 H10 M4 40 H8 M4 45 H9 M4 50 H10 M4 55 H9" stroke="#cbbfc9" strokeWidth="1" />
    <g transform="translate(54 54) scale(0.375)"><FinderFace id="mfd" /></g>
  </Board>
);

const TrashIcon = () => (
  <Board>
    <defs><Grad id="trB" stops={['#cfcad8', '#e9e8ea', '#dcdcdc', '#f4f4f4', '#d8d4dd']} x2={1} y2={0} /></defs>
    <path d="M12 8.500 Q44 0 76 9 L74 16 H14Z" fill="#b9a8dc" />
    <path d="M18 7 L28 2 L34 6 L42 3 L46 10 L52 2 L60 5 L68 4 L72 12 L66 19 H22 L16 12Z" fill="#ececec" />
    <path d="M22 12 L32 8 L38 18 H26Z M46 14 L54 7 L60 13 L56 19 H46Z" fill="#4b4440" />
    <path d="M30 9 L40 8 L38 13Z" fill="#4db8c8" />
    <path d="M50 9 L56 12 L51 16Z" fill="#d2642c" />
    <path d="M60 7 L67 9 L64 17Z M28 4 L32 8 L25 8Z" fill="#8d8d90" />
    <path d="M12 9 Q14 19 44 19.500 Q74 19 76 9 L69 78 Q67 84 44 84 Q21 84 19.500 78Z" fill="url(#trB)" />
    <path d="M12 9 Q14 19 44 19.500 Q74 19 76 9" fill="none" stroke="#fafafa" strokeWidth="1.500" />
    <path d="M30 25 Q42 34 56 24 M24 50 Q34 56 38 48 M50 60 Q60 54 64 62" stroke="#f8f8f8" strokeWidth="2" fill="none" opacity="0.700" />
  </Board>
);

const PeekArt = () => (
  <svg width="884" height="26" viewBox="0 0 884 26">
    <g fill="#6e6e6c">
      <path d="M10 1 h4 v4 h-4z M10 9 h4 v4 h-4z M582 1 h4 v4 h-4z M582 9 h4 v4 h-4z M836 1 h4 v4 h-4z M836 9 h4 v4 h-4z" />
    </g>
    <path d="M621 0 H636 V7 H620Z" fill="#5a4c1c" />
    <path d="M623 0 H634 V4 H623Z" fill="#a88c34" />
    <path d="M648 0 V26" stroke="#8a8a88" strokeWidth="1" />
    <g stroke="#b0702c" strokeWidth="2" fill="none">
      <path d="M662 0 V10 L671 6 L680 10 L689 6 V0 M671 0 V6 M680 0 V10" />
      <path d="M709 0 V10" strokeWidth="3" />
      <path d="M797 0 Q800 9 808 9 Q816 9 819 0 M804 5 L808 2 L812 5" />
    </g>
    <path d="M711 0 H728 Q726 6 718 6 Q714 4 711 5Z M762 0 H768 L757 10 L752 6Z" fill="#b0702c" />
    <rect x="862" y="3" width="8" height="10" rx="2" fill="#4a5058" />
    <rect x="864" y="5" width="4" height="4" fill="#a8b4bc" />
  </svg>
);

/* ---------- data ---------- */

const menus = ['File', 'Edit', 'View', 'History', 'Bookmarks', 'Window', 'Help'];

type App = { name: string; Icon: () => React.ReactElement; dot?: string };

const dockApps: App[] = [
  { name: 'Finder', Icon: FinderIcon, dot: '#06004e' },
  { name: 'Launchpad', Icon: LaunchpadIcon },
  { name: 'Safari', Icon: SafariIcon, dot: '#06004e' },
  { name: 'Messages', Icon: MessagesIcon },
  { name: 'Mail', Icon: MailIcon },
  { name: 'Maps', Icon: MapsIcon },
  { name: 'Photos', Icon: PhotosIcon },
  { name: 'FaceTime', Icon: FaceTimeIcon },
  { name: 'Calendar', Icon: CalendarIcon },
  { name: 'Contacts', Icon: ContactsIcon },
  { name: 'Reminders', Icon: RemindersIcon },
  { name: 'Notes', Icon: NotesIcon, dot: '#06004e' },
  { name: 'TV', Icon: TvIcon },
  { name: 'Music', Icon: MusicIcon },
  { name: 'Podcasts', Icon: PodcastsIcon },
  { name: 'Keynote', Icon: KeynoteIcon },
  { name: 'Numbers', Icon: NumbersIcon },
  { name: 'Pages', Icon: PagesIcon },
  { name: 'App Store', Icon: AppStoreIcon },
  { name: 'System Preferences', Icon: SettingsIcon },
];

const otherApps: App[] = [
  { name: 'Spotify', Icon: SpotifyIcon, dot: '#35007c' },
  { name: 'Word', Icon: WordIcon, dot: '#35007c' },
  { name: 'Visual Studio Code', Icon: VsCodeIcon, dot: '#35007c' },
  { name: 'MySQL Workbench', Icon: MySqlIcon, dot: '#35007c' },
  { name: 'Eclipse', Icon: EclipseIcon, dot: '#2c0078' },
];

const shelf: App[] = [
  { name: 'Disk image', Icon: DiskFileIcon },
  { name: 'Minimized Finder window', Icon: MinimizedFinderIcon },
  { name: 'Trash', Icon: TrashIcon },
];

const DockGroup = ({ apps }: { apps: App[] }) => (
  <>
    {apps.map(({ name, Icon, dot }) => (
      <DockItem key={name} type="button" aria-label={name}>
        <Icon />
        <RunningDot $color={dot} />
      </DockItem>
    ))}
  </>
);

const fields = [
  { id: 'firstName', label: 'FirstName', value: 'bt' },
  { id: 'lastName', label: 'LastName', value: '', focused: true },
  { id: 'course', label: 'Course', value: 'python' },
  { id: 'country', label: 'Country', value: 'india' },
];

export default function App() {
  return (
    <Desktop>
      <GlobalStyle />
      <MenuBar>
        <MenuGroup>
          <MenuItem type="button" aria-label="Apple menu">
            <AppleMark viewBox="18 32 348 448" />
          </MenuItem>
          <MenuItem type="button" $bold>Safari</MenuItem>
          {menus.map((m) => <MenuItem key={m} type="button">{m}</MenuItem>)}
        </MenuGroup>
        <StatusGroup>
          <Bluetooth />
          <Battery />
          <Wifi />
          <Search />
          <ControlCenter />
          <Siri />
          <Clock><span>Fri 18 Mar</span><span>5:08 PM</span></Clock>
        </StatusGroup>
      </MenuBar>

      <BrowserWindow>
        <Toolbar>
          <ToolbarLeft>
            <TrafficLights>
              <Light type="button" aria-label="Close" $fill="#ec6a5e" $edge="#d5594e" />
              <Light type="button" aria-label="Minimize" $fill="#f4bf4f" $edge="#d9a341" />
              <Light type="button" aria-label="Zoom" $fill="#61c554" $edge="#4fa943" />
            </TrafficLights>
            <SidebarGroup>
              <button type="button" aria-label="Show sidebar"><SidebarIcon /></button>
              <ToolDivider />
              <button type="button" aria-label="Tab groups"><Chevron /></button>
            </SidebarGroup>
            <HistoryGroup>
              <button type="button" aria-label="Back"><Back /></button>
              <button type="button" aria-label="Forward"><Forward /></button>
            </HistoryGroup>
            <ExtensionGroup>
              <button type="button" aria-label="Grammarly"><Grammarly /></button>
              <button type="button" aria-label="Privacy report"><Shield /></button>
            </ExtensionGroup>
          </ToolbarLeft>
          <AddressBar>
            <AddressInput type="text" aria-label="Address" defaultValue="localhost" />
            <button type="button" aria-label="Reload"><Reload /></button>
          </AddressBar>
          <ToolbarRight>
            <button type="button" aria-label="Downloads"><Download /></button>
            <button type="button" aria-label="Share"><Share /></button>
            <button type="button" aria-label="New tab"><Plus /></button>
            <button type="button" aria-label="Tab overview"><GridIcon /></button>
          </ToolbarRight>
        </Toolbar>

        <TabBar>
          <Tab type="button"><GreatLearning />Lab 5 - Spring_MVC: Back-End Development - Great Learning</Tab>
          <Tab type="button"><FaGithub size={30} color="#000" />Vamsee27/VamseeKrishnaTunuguntla-Spring_MVCLabSolution</Tab>
          <Tab type="button" $active>Save Student</Tab>
        </TabBar>

        <Page>
          <Title>Student Directory</Title>
          <Rule />
          <Subtitle>Student</Subtitle>
          <StudentForm>
            {fields.map((f) => (
              <Field key={f.id}>
                <TextInput id={f.id} type="text" aria-label={f.label} placeholder={f.label} defaultValue={f.value} $focused={f.focused} />
                {f.focused && (
                  <>
                    <Caret />
                    <AutofillButton type="button" aria-label="Autofill contact"><AutofillIcon /></AutofillButton>
                  </>
                )}
              </Field>
            ))}
            <SaveButton type="submit">Save</SaveButton>
          </StudentForm>
          <Rule />
          <BackLink href="#students">Back to Students List</BackLink>
        </Page>
      </BrowserWindow>

      <PeekStrip>
        <PeekWindow><PeekArt /></PeekWindow>
      </PeekStrip>

      <DockBar>
        <DockGroup apps={dockApps} />
        <DockDivider />
        <DockGroup apps={otherApps} />
        <DockDivider />
        <DockGroup apps={shelf} />
      </DockBar>
    </Desktop>
  );
}
